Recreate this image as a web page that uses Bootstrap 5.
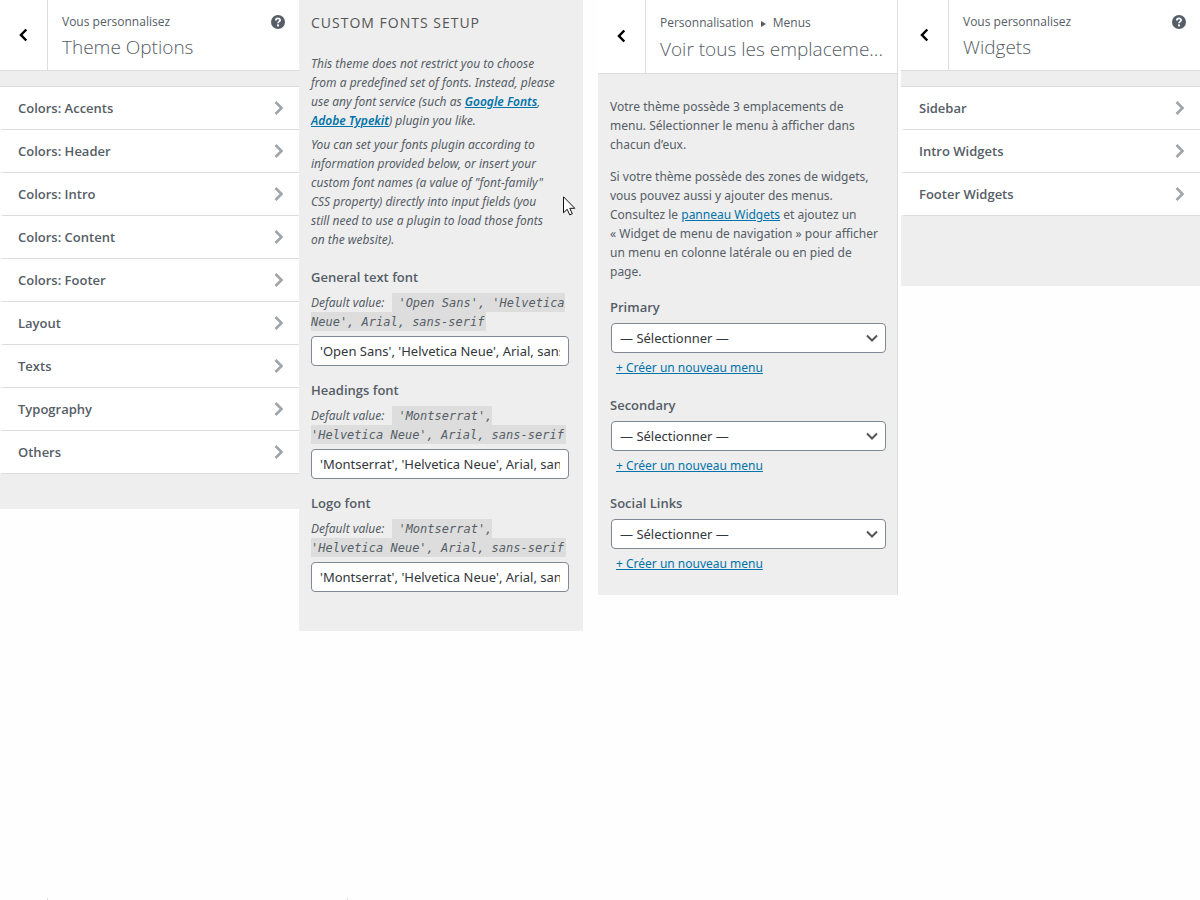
<!DOCTYPE html>
<html lang="fr">
<head>
<meta charset="utf-8">
<meta name="viewport" content="width=device-width, initial-scale=1">
<title>Personnalisation</title>
<link href="https://cdn.jsdelivr.net/npm/bootstrap@5.3.0/dist/css/bootstrap.min.css" rel="stylesheet">
<style>
  body { font-family: "Open Sans", "Noto Sans", sans-serif; font-size: 13px; line-height: 19px; color: #555d66; background: #fefefe; }
  a { color: #0073aa; }
  .panels { display: grid; grid-template-columns: 299fr 284fr 300fr 299fr; align-items: start; padding-right: 18px; }
  .panel { background: #eee; min-width: 0; }
  .panel-menus { margin-left: 15px; margin-right: -15px; border-right: 1px solid #ddd; }
  .panel-widgets { margin-left: 18px; margin-right: -18px; }
  .panel-widgets .sections { padding-bottom: 70px; }
  .panel-head { background: #fff; border-bottom: 1px solid #ddd; height: 71px; }
  .back { width: 48px; border: 0; border-right: 1px solid #ddd; background: #fff; flex: none; padding: 0 2px 2px 0; }
  .head-text { padding: 12px 0 0 14px; }
  .crumb { font-size: 12px; line-height: 19px; }
  .panel-title { font-size: 19px; line-height: 26px; font-weight: 300; margin: 3px 0 0; white-space: nowrap; }
  .panel-head.tall { height: 74px; }
  .tall .head-text { padding-top: 13px; }
  .tall .panel-title { margin-top: 4px; }
  .tall .back { padding-bottom: 4px; }
  .help { border: 0; background: none; padding: 0; width: 14px; height: 14px; margin: 15px 14px 0 0; line-height: 0; }
  .sections { margin-top: 15px; border-top: 1px solid #ddd; padding-bottom: 35px; }
  .sections a { border: 0 solid #ddd; border-width: 0 0 1px 3px; border-left-color: #fff; background: #fff; height: 43px; padding: 0 15px; color: #555d66; font-weight: 600; }
  .panel-fonts, .menus-body { font-family: "Noto Sans", "Open Sans", sans-serif; font-size: 12px; white-space: nowrap; }
  .setup-title { font-family: "Open Sans", sans-serif; font-size: 14px; line-height: 18px; font-weight: 500; letter-spacing: 1px; color: #555; padding-top: 14px; margin: 0 0 22px; }
  .panel-fonts { padding: 0 14px 39px 12px; }
  .panel-fonts p { margin-bottom: 5px; }
  .panel-fonts p a { font-weight: 600; }
  .field-label { font-family: "Open Sans", sans-serif; font-size: 13px; line-height: 19px; font-weight: 600; display: block; }
  code { font: 12px/1 "DejaVu Sans Mono", monospace; color: #555d66; background: #ddd; padding: 3px 2px 2px 6px; margin-left: 5px; }
  .font-field { margin-top: 15px; }
  .font-field.first-field { margin-top: 19px; }
  .panel-fonts .default-value { margin-top: 6px; }
  .form-control, .form-select { height: 30px; border: 1px solid #7e8993; border-radius: 4px; color: #32373c; padding: 0 8px; font-size: 13px; line-height: 28px; }
  .form-select { background: #fff url("data:image/svg+xml,%3Csvg xmlns='http://www.w3.org/2000/svg' viewBox='0 0 12 8'%3E%3Cpath d='M1 1.5l5 5 5-5' fill='none' stroke='%23555' stroke-width='2'/%3E%3C/svg%3E") no-repeat right 7px center / 12px 8px; }
  .menus-body { padding: 23px 11px 22px 12px; }
  .menus-body p { margin-bottom: 13px; }
  .locations { margin-top: 17px; }
  .menus-body .form-select { margin: 6px 0 5px 1px; width: calc(100% - 1px); }
  .menu-location { margin-bottom: 19px; }
  .menu-location a { margin-left: 6px; }
  .menu-location:last-child { margin-bottom: 0; }
  .pointer { left: 264px; top: 196px; }
  .ticks { height: 2px; }
  .ticks div { border-right: 1px solid #ddd; }
</style>
</head>
<body class="d-flex flex-column min-vh-100">
<svg class="d-none">
  <symbol id="i-back" viewBox="0 0 10 14"><path d="M8.300 1.500L3 7l5.300 5.500" fill="none" stroke="#000" stroke-width="2.500"/></symbol>
  <symbol id="i-next" viewBox="0 0 10 14"><path d="M1.500 1L7.500 7l-6 6" fill="none" stroke="#a0a5aa" stroke-width="2.600"/></symbol>
  <symbol id="i-help" viewBox="0 0 14 14"><circle cx="7" cy="7" r="7" fill="#555d66"/><path d="M4.900 5.400C4.900 2.700 9.200 2.900 9.100 5.200 9 6.700 7 6.600 7 8.300" fill="none" stroke="#fff" stroke-width="1.800"/><rect x="6" y="9.400" width="2" height="2" fill="#fff"/></symbol>
</svg>
<main class="panels">
  <section class="panel">
    <header class="panel-head d-flex">
      <button class="back" type="button" aria-label="Retour"><svg width="10" height="14"><use href="#i-back"/></svg></button>
      <div class="flex-grow-1 head-text">
        <div class="crumb">Vous personnalisez</div>
        <h1 class="panel-title">Theme Options</h1>
      </div>
      <button class="help" type="button" aria-label="Aide"><svg width="14" height="14"><use href="#i-help"/></svg></button>
    </header>
    <nav class="sections">
      <a href="#" class="d-flex align-items-center justify-content-between text-decoration-none">Colors: Accents<svg width="10" height="14"><use href="#i-next"/></svg></a>
      <a href="#" class="d-flex align-items-center justify-content-between text-decoration-none">Colors: Header<svg width="10" height="14"><use href="#i-next"/></svg></a>
      <a href="#" class="d-flex align-items-center justify-content-between text-decoration-none">Colors: Intro<svg width="10" height="14"><use href="#i-next"/></svg></a>
      <a href="#" class="d-flex align-items-center justify-content-between text-decoration-none">Colors: Content<svg width="10" height="14"><use href="#i-next"/></svg></a>
      <a href="#" class="d-flex align-items-center justify-content-between text-decoration-none">Colors: Footer<svg width="10" height="14"><use href="#i-next"/></svg></a>
      <a href="#" class="d-flex align-items-center justify-content-between text-decoration-none">Layout<svg width="10" height="14"><use href="#i-next"/></svg></a>
      <a href="#" class="d-flex align-items-center justify-content-between text-decoration-none">Texts<svg width="10" height="14"><use href="#i-next"/></svg></a>
      <a href="#" class="d-flex align-items-center justify-content-between text-decoration-none">Typography<svg width="10" height="14"><use href="#i-next"/></svg></a>
      <a href="#" class="d-flex align-items-center justify-content-between text-decoration-none">Others<svg width="10" height="14"><use href="#i-next"/></svg></a>
    </nav>
  </section>

  <section class="panel panel-fonts position-relative">
    <h2 class="setup-title">CUSTOM FONTS SETUP</h2>
    <div class="fst-italic">
      <p>This theme does not restrict you to choose<br>from a predefined set of fonts. Instead, please<br>use any font service (such as <a href="#">Google Fonts</a>,<br><a href="#">Adobe Typekit</a>) plugin you like.</p>
      <p>You can set your fonts plugin according to<br>information provided below, or insert your<br>custom font names (a value of "font-family"<br>CSS property) directly into input fields (you<br>still need to use a plugin to load those fonts<br>on the website).</p>
    </div>
    <div class="font-field first-field">
      <label class="field-label" for="f1">General text font</label>
      <p class="fst-italic default-value">Default value: <code class="fst-italic">'Open Sans', 'Helvetica<br>Neue', Arial, sans-serif</code></p>
      <input class="form-control" id="f1" type="text" value="'Open Sans', 'Helvetica Neue', Arial, sans-serif">
    </div>
    <div class="font-field">
      <label class="field-label" for="f2">Headings font</label>
      <p class="fst-italic default-value">Default value: <code class="fst-italic">'Montserrat',<br>'Helvetica Neue', Arial, sans-serif</code></p>
      <input class="form-control" id="f2" type="text" value="'Montserrat', 'Helvetica Neue', Arial, sans-serif">
    </div>
    <div class="font-field">
      <label class="field-label" for="f3">Logo font</label>
      <p class="fst-italic default-value">Default value: <code class="fst-italic">'Montserrat',<br>'Helvetica Neue', Arial, sans-serif</code></p>
      <input class="form-control" id="f3" type="text" value="'Montserrat', 'Helvetica Neue', Arial, sans-serif">
    </div>
    <svg class="pointer position-absolute" width="13" height="20" viewBox="0 0 13 20"><path d="M.5.800v16l3.700-3.500 2.500 5.600 2.600-1.100-2.500-5.500h5z" fill="#fff" stroke="#111" stroke-width="1"/></svg>
  </section>

  <section class="panel panel-menus">
    <header class="panel-head tall d-flex">
      <button class="back" type="button" aria-label="Retour"><svg width="10" height="14"><use href="#i-back"/></svg></button>
      <div class="flex-grow-1 head-text">
        <div class="crumb">Personnalisation <svg class="mx-1" width="5" height="6" viewBox="0 0 5 6"><path d="M0 0l5 3-5 3z" fill="#555d66"/></svg> Menus</div>
        <h1 class="panel-title">Voir tous les emplaceme...</h1>
      </div>
    </header>
    <div class="menus-body">
      <p>Votre thème possède 3 emplacements de<br>menu. Sélectionner le menu à afficher dans<br>chacun d’eux.</p>
      <p>Si votre thème possède des zones de widgets,<br>vous pouvez aussi y ajouter des menus.<br>Consultez le <a href="#">panneau Widgets</a> et ajoutez un<br>« Widget de menu de navigation » pour afficher<br>un menu en colonne latérale ou en pied de<br>page.</p>
      <div class="locations">
        <div class="menu-location">
          <label class="field-label" for="m1">Primary</label>
          <select class="form-select" id="m1"><option>— Sélectionner —</option></select>
          <a href="#">+ Créer un nouveau menu</a>
        </div>
        <div class="menu-location">
          <label class="field-label" for="m2">Secondary</label>
          <select class="form-select" id="m2"><option>— Sélectionner —</option></select>
          <a href="#">+ Créer un nouveau menu</a>
        </div>
        <div class="menu-location">
          <label class="field-label" for="m3">Social Links</label>
          <select class="form-select" id="m3"><option>— Sélectionner —</option></select>
          <a href="#">+ Créer un nouveau menu</a>
        </div>
      </div>
    </div>
  </section>

  <section class="panel panel-widgets">
    <header class="panel-head d-flex">
      <button class="back" type="button" aria-label="Retour"><svg width="10" height="14"><use href="#i-back"/></svg></button>
      <div class="flex-grow-1 head-text">
        <div class="crumb">Vous personnalisez</div>
        <h1 class="panel-title">Widgets</h1>
      </div>
      <button class="help" type="button" aria-label="Aide"><svg width="14" height="14"><use href="#i-help"/></svg></button>
    </header>
    <nav class="sections">
      <a href="#" class="d-flex align-items-center justify-content-between text-decoration-none">Sidebar<svg width="10" height="14"><use href="#i-next"/></svg></a>
      <a href="#" class="d-flex align-items-center justify-content-between text-decoration-none">Intro Widgets<svg width="10" height="14"><use href="#i-next"/></svg></a>
      <a href="#" class="d-flex align-items-center justify-content-between text-decoration-none">Footer Widgets<svg width="10" height="14"><use href="#i-next"/></svg></a>
    </nav>
  </section>
</main>
<footer class="ticks d-flex mt-auto"><div style="width:4%"></div><div style="width:25%"></div></footer>
<script src="https://cdn.jsdelivr.net/npm/bootstrap@5.3.0/dist/js/bootstrap.bundle.min.js"></script>
</body>
</html>
